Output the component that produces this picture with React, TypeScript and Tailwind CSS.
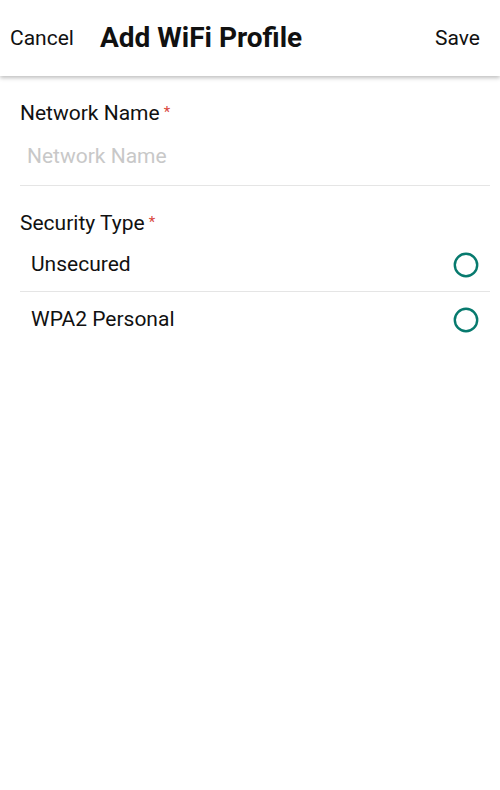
export default function App() {
  const font = { fontFamily: "Roboto, 'Noto Sans', sans-serif" };
  return (
    <div className="w-[500px] h-[790px] bg-white text-[#111]" style={font}>
      <div className="h-[76px] flex items-center justify-between pl-[10px] pr-[20px] shadow-[0_2px_4px_rgba(0,0,0,0.25)] relative z-10">
        <div className="flex items-center">
          <span className="text-[21px] leading-none">Cancel</span>
          <span className="ml-[26px] text-[28px] font-bold leading-none">Add WiFi Profile</span>
        </div>
        <span className="text-[21px] leading-none">Save</span>
      </div>
      <div className="pl-[20px] pr-[10px]">
        <div className="mt-[25px] h-[24px] flex items-center text-[21px] leading-[24px]">
          <span>Network Name</span>
          <span className="text-[#d9453c] text-[15px] ml-[4px] -mt-[2px]">*</span>
        </div>
        <div className="mt-[19px] h-[42px] border-b border-[#e5e5e5] pl-[7px] text-[21px] leading-[24px] text-[#c8c8c8]">
          Network Name
        </div>
        <div className="mt-[25px] h-[24px] flex items-center text-[21px] leading-[24px]">
          <span>Security Type</span>
          <span className="text-[#d9453c] text-[15px] ml-[4px] -mt-[2px]">*</span>
        </div>
        <div className="mt-[3px]">
          {["Unsecured", "WPA2 Personal"].map((t, i) => (
            <div
              key={t}
              className={`h-[54px] flex items-center justify-between pl-[11px] pr-[11px] text-[21px] ${i === 0 ? "border-b border-[#e5e5e5]" : "pt-[2px]"}`}
            >
              <span>{t}</span>
              <svg width="26" height="26" viewBox="0 0 26 26">
                <circle cx="13" cy="13" r="11.2" fill="none" stroke="#077a6e" strokeWidth="2.4" />
              </svg>
            </div>
          ))}
        </div>
      </div>
    </div>
  );
}
